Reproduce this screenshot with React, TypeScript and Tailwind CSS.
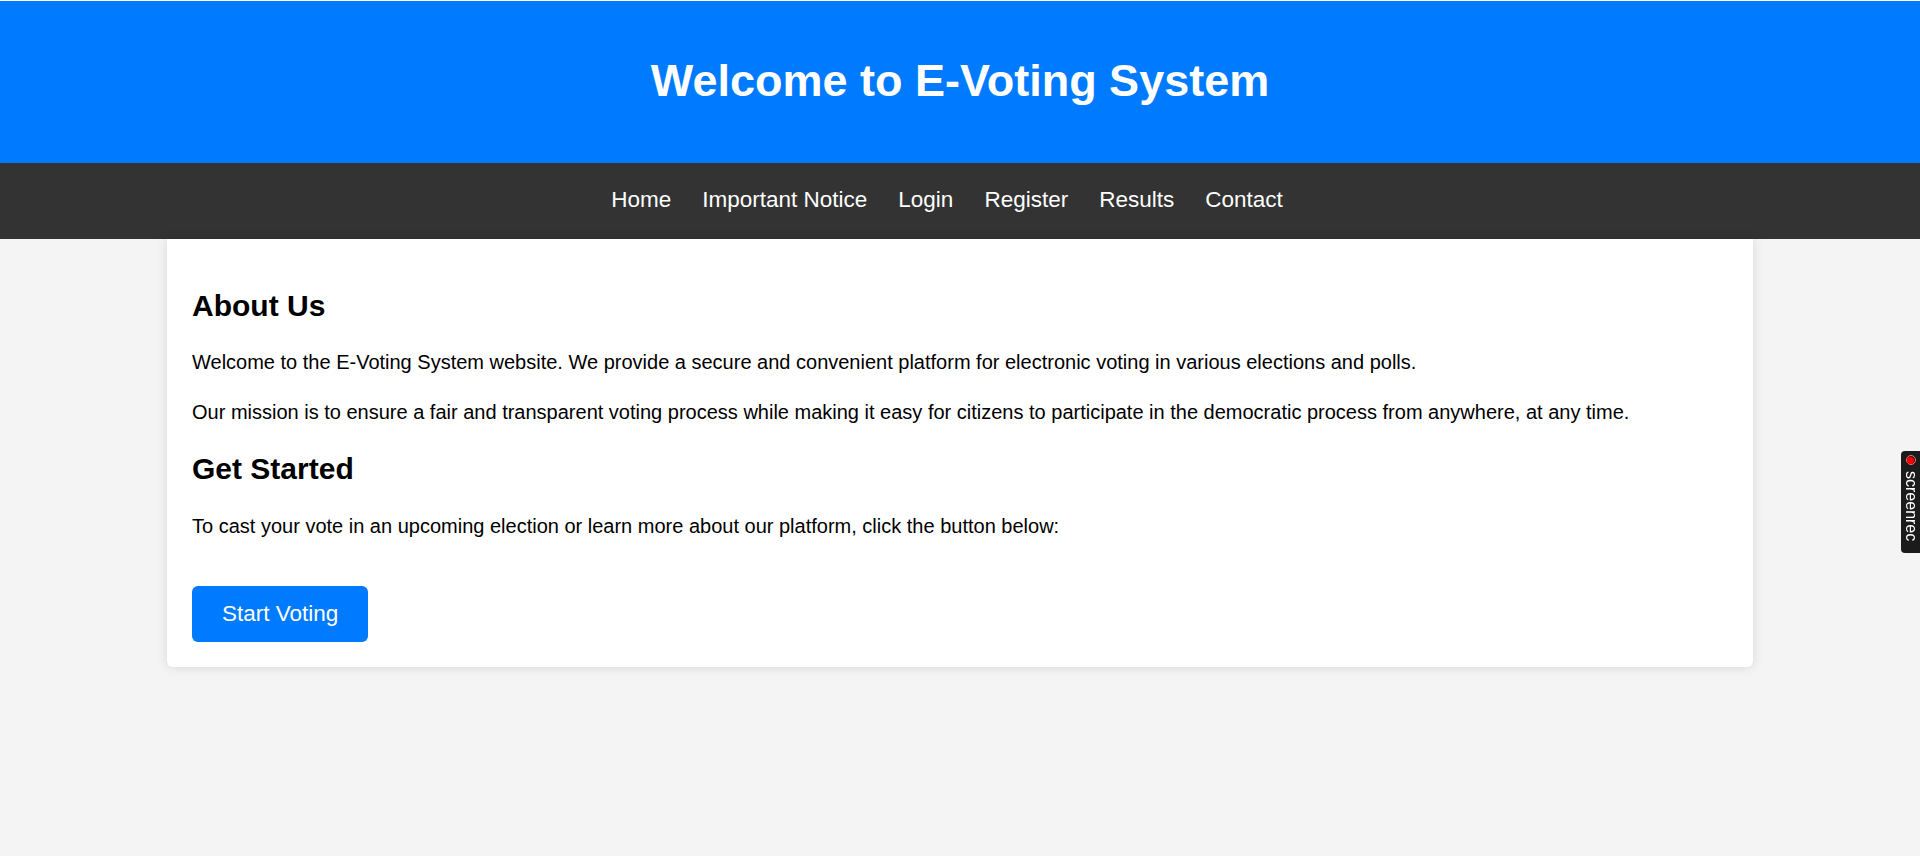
import React from "react";

export default function App() {
  const links = ["Home", "Important Notice", "Login", "Register", "Results", "Contact"];
  return (
    <div
      className="min-h-[856px] bg-[#f4f4f4] text-black"
      style={{ fontFamily: '"Liberation Sans", Arial, sans-serif' }}
    >
      <header className="border-t border-white bg-[#007bff] h-[163px] flex items-center justify-center pb-[3px]">
        <h1 className="text-[45px] font-bold text-white leading-[52px]">Welcome to E-Voting System</h1>
      </header>
      <nav className="bg-[#333333] h-[76px] flex items-center justify-center gap-[31px] pb-[2px] pr-[26px]">
        {links.map((l) => (
          <a key={l} href="#" className="text-white text-[22.5px] leading-[26px]">
            {l}
          </a>
        ))}
      </nav>
      <main className="mx-auto w-[1586px] bg-white rounded-b-[6px] p-[25px] shadow-[0_0_12px_rgba(0,0,0,0.12)]">
        <h2 className="text-[30px] font-bold leading-[45px] mt-[19px]">About Us</h2>
        <p className="text-[20px] leading-[30px] mt-[19px]">
          Welcome to the E-Voting System website. We provide a secure and convenient platform for electronic voting in various elections and polls.
        </p>
        <p className="text-[20px] leading-[30px] mt-[20px]">
          Our mission is to ensure a fair and transparent voting process while making it easy for citizens to participate in the democratic process from anywhere, at any time.
        </p>
        <h2 className="text-[30px] font-bold leading-[45px] mt-[19px]">Get Started</h2>
        <p className="text-[20px] leading-[30px] mt-[20px]">
          To cast your vote in an upcoming election or learn more about our platform, click the button below:
        </p>
        <button className="mt-[45px] bg-[#007bff] text-white text-[22.5px] leading-[26px] px-[30px] py-[15px] rounded-[6px]">
          Start Voting
        </button>
      </main>
      <div className="fixed right-0 top-[451px] w-[19px] h-[102px] bg-[#1b1b1b] rounded-l-[4px] flex flex-col items-center pt-[4px]">
        <div className="w-[10px] h-[10px] rounded-full border border-[#ff7070] flex items-center justify-center">
          <div className="w-[7px] h-[7px] rounded-full bg-[#ff0000]" />
        </div>
        <div
          className="text-white text-[16px] leading-[16px] mt-[6px]"
          style={{ writingMode: "vertical-rl" }}
        >
          screenrec
        </div>
      </div>
    </div>
  );
}
